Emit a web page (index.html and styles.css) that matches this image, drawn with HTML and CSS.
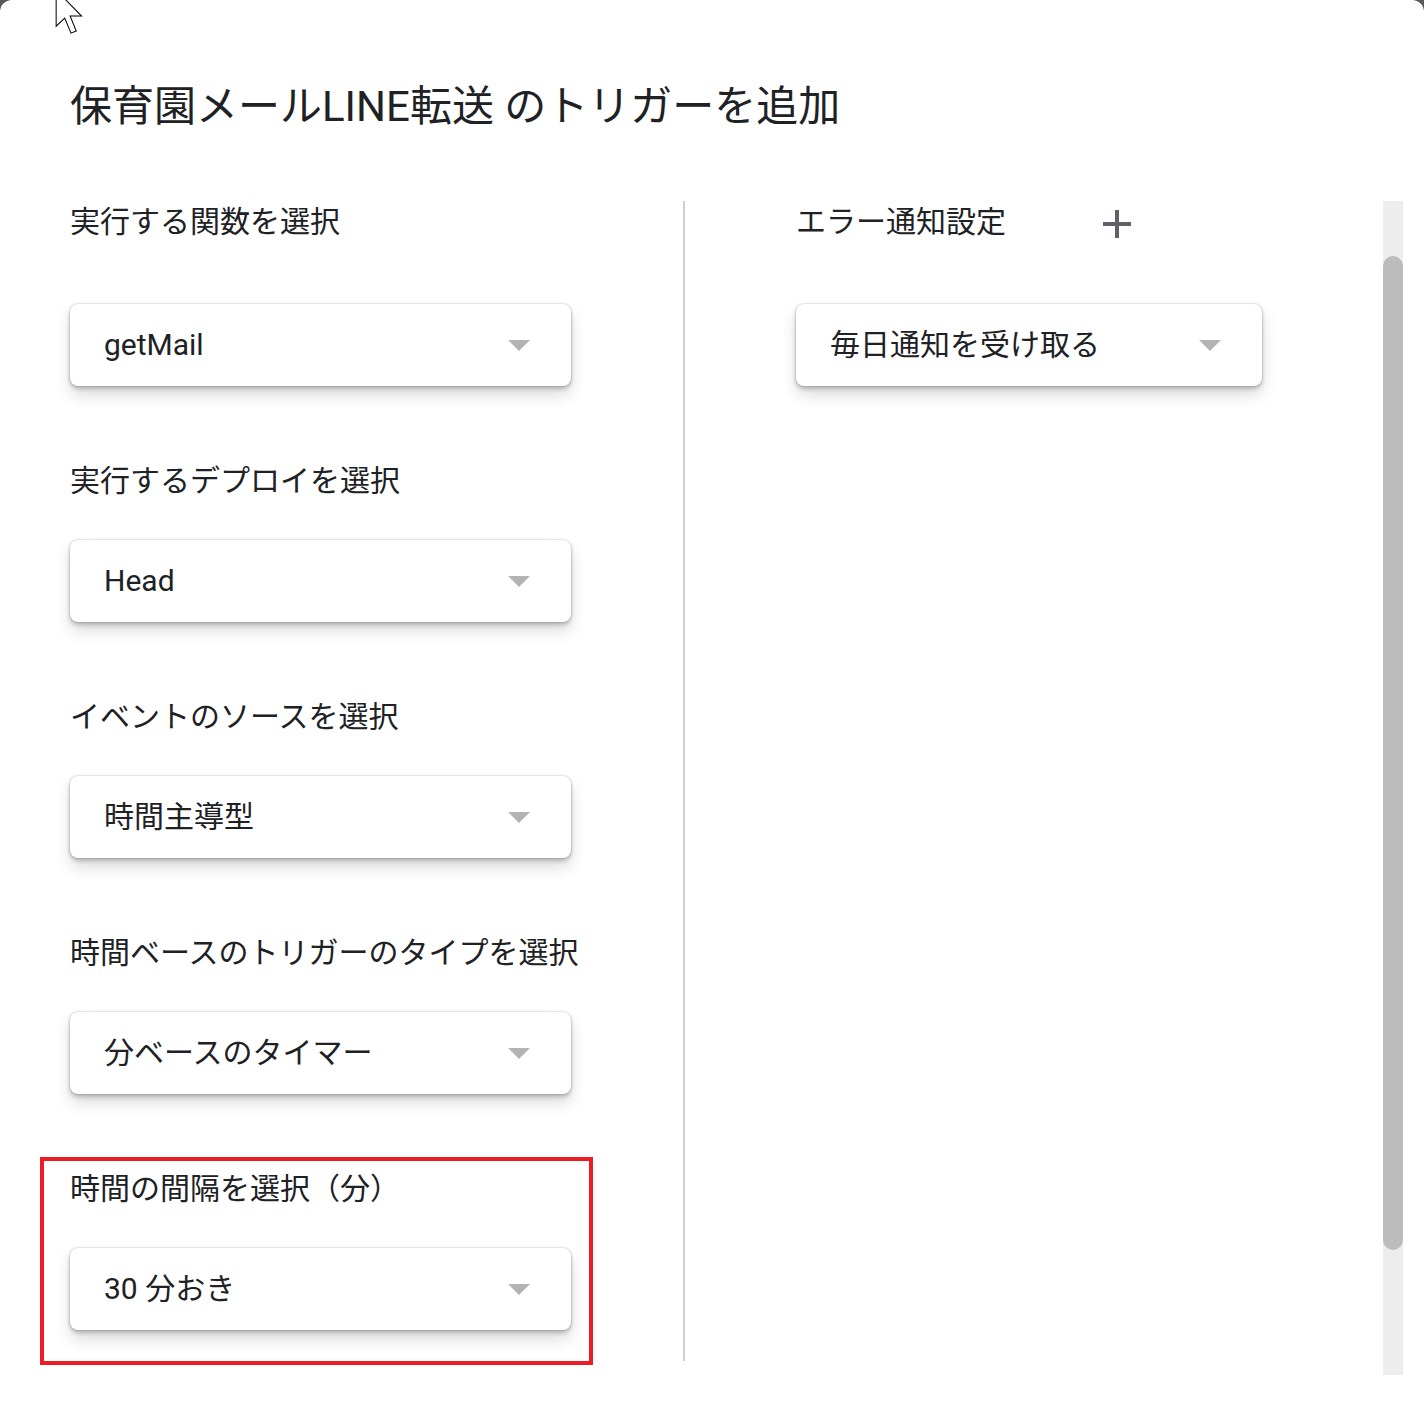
FILE: index.html
```html
<!DOCTYPE html>
<html lang="ja">
<head>
    <meta charset="UTF-8">
    <meta name="viewport" content="width=device-width, initial-scale=1.0">
    <title>トリガーを追加</title>
    <link rel="stylesheet" href="styles.css">
</head>
<body>
    <div class="dialog">
        <h1 class="dialog-title">保育園メールLINE転送 のトリガーを追加</h1>

        <div class="columns">
            <div class="col-left">
                <div class="field">
                    <div class="field-label field-label-first">実行する関数を選択</div>
                    <div class="select">
                        <span class="select-value">getMail</span>
                        <span class="select-arrow"></span>
                    </div>
                </div>

                <div class="field">
                    <div class="field-label">実行するデプロイを選択</div>
                    <div class="select">
                        <span class="select-value">Head</span>
                        <span class="select-arrow"></span>
                    </div>
                </div>

                <div class="field">
                    <div class="field-label">イベントのソースを選択</div>
                    <div class="select">
                        <span class="select-value">時間主導型</span>
                        <span class="select-arrow"></span>
                    </div>
                </div>

                <div class="field">
                    <div class="field-label">時間ベースのトリガーのタイプを選択</div>
                    <div class="select">
                        <span class="select-value">分ベースのタイマー</span>
                        <span class="select-arrow"></span>
                    </div>
                </div>

                <div class="field field-marked">
                    <div class="field-label">時間の間隔を選択（分）</div>
                    <div class="select">
                        <span class="select-value">30 分おき</span>
                        <span class="select-arrow"></span>
                    </div>
                    <div class="mark"></div>
                </div>
            </div>

            <div class="divider"></div>

            <div class="col-right">
                <div class="field">
                    <div class="field-label field-label-first">
                        <span>エラー通知設定</span>
                        <svg class="add-icon" width="28" height="28" viewBox="0 0 28 28">
                            <path d="M14 0v28M0 14h28" stroke="#5f6368" stroke-width="4" fill="none"/>
                        </svg>
                    </div>
                    <div class="select select-narrow">
                        <span class="select-value">毎日通知を受け取る</span>
                        <span class="select-arrow"></span>
                    </div>
                </div>
            </div>

            <div class="scrollbar">
                <div class="scrollbar-thumb"></div>
            </div>
        </div>
    </div>

    <svg class="cursor" width="28" height="46" viewBox="0 0 12.4 20.4">
        <polygon points="0.5,0.5 0.5,16.5 4.3,12.9 7.1,19.6 9.4,18.6 6.7,12 11.8,12" fill="#fff" stroke="#000" stroke-width="0.45" stroke-linejoin="miter"/>
    </svg>
</body>
</html>
```

FILE: styles.css
```css
body {
    margin: 0;
    background: #5a5a5a;
    font-family: Roboto, "Noto Sans CJK JP", sans-serif;
    color: #202124;
}

.dialog {
    background: #fff;
    border-radius: 12px 12px 0 0;
    min-height: 1402px;
    padding-top: 83px;
    box-sizing: border-box;
}

.dialog-title {
    margin: 0 0 0 70px;
    font-size: 42px;
    font-weight: 400;
    line-height: 48px;
}

.columns {
    display: flex;
    align-items: flex-start;
    margin-top: 70px;
    padding-left: 70px;
}

.col-left {
    width: 613px;
}

.col-right {
    flex: 1;
    padding-left: 111px;
}

.divider {
    width: 2px;
    height: 1160px;
    background: #cfcfd2;
}

/* Fields */
.field {
    position: relative;
    margin-bottom: 74px;
}

.field-label {
    font-size: 30px;
    line-height: 42px;
    margin-bottom: 38px;
    white-space: nowrap;
}

.field-label-first {
    margin-bottom: 61px;
    display: flex;
    align-items: center;
}

.add-icon {
    margin-left: 97px;
    margin-top: 4px;
}

.select {
    display: flex;
    align-items: center;
    justify-content: space-between;
    width: 501px;
    height: 82px;
    box-sizing: border-box;
    padding: 0 41px 0 34px;
    background: #fff;
    border-radius: 8px;
    box-shadow: 0 0 2px rgba(0, 0, 0, 0.3), 0 3px 4px rgba(0, 0, 0, 0.2), 0 9px 16px rgba(0, 0, 0, 0.14);
}

.select-narrow {
    width: 466px;
}

.select-value {
    font-size: 30px;
    line-height: 40px;
}

.select-arrow {
    width: 0;
    height: 0;
    border-left: 11px solid transparent;
    border-right: 11px solid transparent;
    border-top: 11px solid #b3b3b3;
}

.field-marked {
    margin-bottom: 31px;
}

.mark {
    position: absolute;
    left: -30px;
    top: -11px;
    width: 545px;
    height: 200px;
    border: 4px solid #ed1c24;
}

/* Scrollbar */
.scrollbar {
    width: 20px;
    height: 1174px;
    margin-right: 21px;
    padding-top: 55px;
    box-sizing: border-box;
    background: #ededed;
}

.scrollbar-thumb {
    height: 994px;
    border-radius: 10px;
    background: #bcbcbc;
}

.cursor {
    position: absolute;
    left: 55px;
    top: -11px;
}
```
